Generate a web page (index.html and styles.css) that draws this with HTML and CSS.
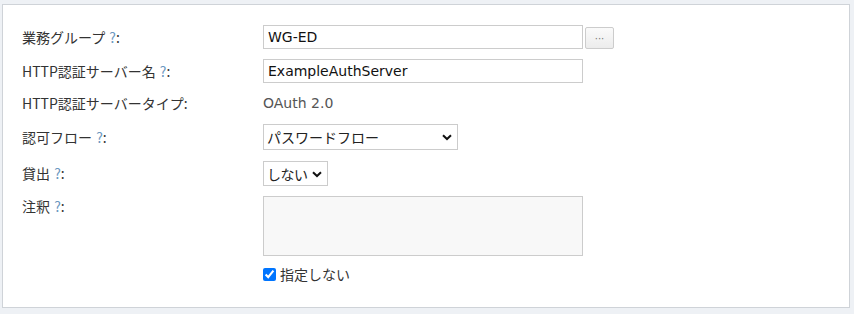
FILE: index.html
```html
<!DOCTYPE html>
<html lang="ja">
<head>
<meta charset="utf-8">
<link rel="stylesheet" href="styles.css">
</head>
<body>
<div class="panel">
  <div class="row">
    <div class="label">業務グループ <span class="help">?</span>:</div>
    <div class="value">
      <input class="text" type="text" value="WG-ED">
      <button class="more">···</button>
    </div>
  </div>
  <div class="row">
    <div class="label">HTTP認証サーバー名 <span class="help">?</span>:</div>
    <div class="value"><input class="text" type="text" value="ExampleAuthServer"></div>
  </div>
  <div class="row row-static">
    <div class="label">HTTP認証サーバータイプ:</div>
    <div class="value static">OAuth 2.0</div>
  </div>
  <div class="row">
    <div class="label">認可フロー <span class="help">?</span>:</div>
    <div class="value">
      <div class="select select-wide">
        <span class="select-text">パスワードフロー</span>
        <svg class="chev" viewBox="0 0 10 7" width="10" height="7"><path d="M1 1.2 L5 5 L9 1.2" fill="none" stroke="#111" stroke-width="2"/></svg>
      </div>
    </div>
  </div>
  <div class="row">
    <div class="label">貸出 <span class="help">?</span>:</div>
    <div class="value">
      <div class="select select-narrow">
        <span class="select-text">しない</span>
        <svg class="chev" viewBox="0 0 10 7" width="10" height="7"><path d="M1 1.2 L5 5 L9 1.2" fill="none" stroke="#111" stroke-width="2"/></svg>
      </div>
    </div>
  </div>
  <div class="row row-top">
    <div class="label">注釈 <span class="help">?</span>:</div>
    <div class="value column">
      <textarea class="area"></textarea>
      <label class="check"><input type="checkbox" checked>指定しない</label>
    </div>
  </div>
</div>
</body>
</html>
```

FILE: styles.css
```css
html, body {
  margin: 0;
  padding: 0;
  background: #eef1f5;
}
body {
  padding: 4px 4px 6px 2px;
  font-family: "DejaVu Sans", "Noto Sans CJK JP", sans-serif;
  font-size: 14px;
  color: #333;
}
.panel {
  background: #fff;
  border: 1px solid #cfd3d8;
  height: 304px;
  box-sizing: border-box;
  padding: 20px 19px 0 19px;
  display: flex;
  flex-direction: column;
  gap: 10px;
}
.row {
  display: flex;
  align-items: center;
  min-height: 24px;
}
.row-static { min-height: 22px; margin-top: -1px; }
.row-top { align-items: flex-start; }
.label {
  width: 241px;
  flex: none;
  line-height: 20px;
  font-family: "Noto Sans CJK JP", "DejaVu Sans", sans-serif;
}
.help {
  color: #6b98bf;
  margin-left: 1px;
}
.value {
  display: flex;
  align-items: center;
  gap: 2px;
}
.value.column {
  flex-direction: column;
  align-items: flex-start;
  gap: 10px;
}
.static { color: #555; }
.text {
  width: 320px;
  height: 24px;
  box-sizing: border-box;
  border: 1px solid #ccc;
  padding: 0 4px;
  font: inherit;
  font-size: 14px;
  color: #111;
  outline: none;
}
.more {
  width: 29px;
  height: 22px;
  box-sizing: border-box;
  border: 1px solid #ccc;
  border-radius: 2px;
  background: linear-gradient(#fafafa, #ececec);
  color: #777;
  font-size: 10px;
  padding: 0;
  margin-top: 2px;
  font-family: "DejaVu Sans", sans-serif;
}
.select {
  position: relative;
  box-sizing: border-box;
  border: 1px solid #ccc;
  display: flex;
  align-items: center;
  padding-left: 3px;
  font-family: "Noto Sans CJK JP", sans-serif;
  color: #222;
  background: #fff;
}
.select-wide { width: 195px; height: 26px; }
.select-narrow { width: 65px; height: 25px; margin-top: 1px; }
.select-narrow .select-text { letter-spacing: -0.5px; }
.chev {
  position: absolute;
  right: 5px;
  top: 50%;
  margin-top: -3px;
}
.area {
  width: 320px;
  height: 60px;
  box-sizing: border-box;
  border: 1px solid #ccc;
  background: #f8f8f8;
  resize: none;
  margin: 0;
  outline: none;
}
.check {
  display: flex;
  align-items: center;
  gap: 4px;
  margin-top: -2px;
  font-family: "Noto Sans CJK JP", sans-serif;
  color: #333;
}
.check input {
  margin: 0;
  width: 13px;
  height: 13px;
  accent-color: #0075ff;
}
```
